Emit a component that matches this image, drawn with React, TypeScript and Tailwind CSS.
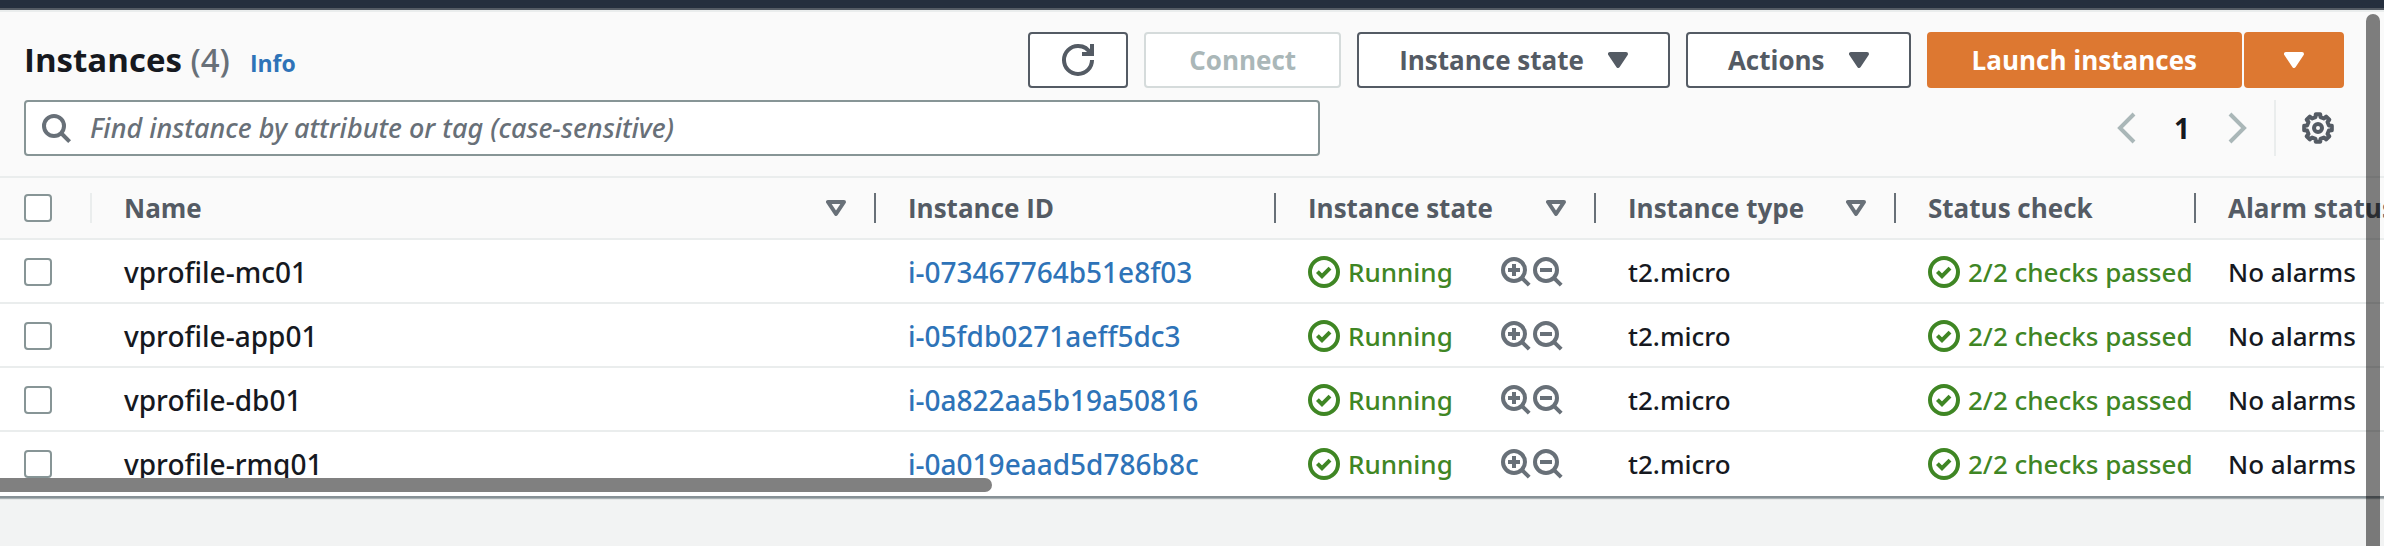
import type { ReactNode } from "react";

type Instance = { name: string; id: string; type: string };

const instances: Instance[] = [
  { name: "vprofile-mc01", id: "i-073467764b51e8f03", type: "t2.micro" },
  { name: "vprofile-app01", id: "i-05fdb0271aeff5dc3", type: "t2.micro" },
  { name: "vprofile-db01", id: "i-0a822aa5b19a50816", type: "t2.micro" },
  { name: "vprofile-rmq01", id: "i-0a019eaad5d786b8c", type: "t2.micro" },
];

const columns = [
  { label: "Name", sortable: true, width: "w-[784px]" },
  { label: "Instance ID", sortable: false, width: "w-[400px]" },
  { label: "Instance state", sortable: true, width: "w-[320px]" },
  { label: "Instance type", sortable: true, width: "w-[300px]" },
  { label: "Status check", sortable: false, width: "w-[300px]" },
  { label: "Alarm status", sortable: false, width: "w-[300px]" },
];

function Icon({ children, className = "" }: { children: ReactNode; className?: string }) {
  return (
    <svg
      viewBox="0 0 16 16"
      aria-hidden="true"
      className={`size-8 shrink-0 fill-none stroke-current stroke-2 ${className}`}
    >
      {children}
    </svg>
  );
}

function Caret({ filled = false }: { filled?: boolean }) {
  return (
    <svg
      viewBox="3 0 10 16"
      aria-hidden="true"
      className={`h-8 w-5 shrink-0 stroke-current stroke-2 ${filled ? "fill-current" : "fill-none"}`}
    >
      <path d="M4 5h8l-4 6-4-6z" strokeLinejoin="round" />
    </svg>
  );
}

function CheckIcon() {
  return (
    <Icon>
      <circle cx="8" cy="8" r="7" />
      <path d="m4.7 7.8 2.3 2.3 4-4" />
    </Icon>
  );
}

// Eight-toothed cog centred on 8,8.
const gearPath =
  Array.from({ length: 8 }, (_, i) => i * 45)
    .flatMap((a) => [
      [a - 13, 5.6],
      [a - 9, 7],
      [a + 9, 7],
      [a + 13, 5.6],
    ])
    .map(([deg, r], i) => {
      const t = (deg * Math.PI) / 180;
      return `${i ? "L" : "M"}${(8 + r * Math.cos(t)).toFixed(2)} ${(8 + r * Math.sin(t)).toFixed(2)}`;
    })
    .join("") + "Z";

const buttonBase =
  "flex h-14 items-center justify-center rounded border-2 text-[26px] font-bold whitespace-nowrap";

function Button({ children, className = "px-10", ...rest }: { children: ReactNode; className?: string; "aria-label"?: string }) {
  return (
    <button type="button" className={`${buttonBase} gap-6 border-[#545b64] bg-white text-[#545b64] ${className}`} {...rest}>
      {children}
    </button>
  );
}

function Checkbox({ label }: { label: string }) {
  return (
    <input
      type="checkbox"
      aria-label={label}
      className="block size-7 appearance-none rounded border-2 border-[#879596] bg-white checked:bg-[#0073bb]"
    />
  );
}

function Toolbar() {
  return (
    <header className="flex flex-col gap-3 border-b-2 border-[#eaeded] pt-5 pr-10 pb-5 pl-6">
      <div className="flex items-center justify-between">
        <div className="flex items-baseline">
          <h1 className="text-[33px] leading-[44px] font-bold text-[#16191f]">
            Instances <span className="font-['Noto_Sans',sans-serif] font-medium text-[#687078]">(4)</span>
          </h1>
          <a href="#info" className="ml-5 text-[23px] font-bold text-[#2e73b8]">
            Info
          </a>
        </div>
        <div className="flex gap-4">
          <Button aria-label="Refresh" className="w-[100px]">
            <Icon>
              <path d="M10 5h5V0" />
              <path d="M15 8a6.957 6.957 0 0 1-7 7 6.957 6.957 0 0 1-7-7 6.957 6.957 0 0 1 7-7 6.87 6.87 0 0 1 6.3 4" />
            </Icon>
          </Button>
          <button type="button" disabled className={`${buttonBase} border-[#d5dbdb] bg-white px-[43px] text-[#aab7b8]`}>
            Connect
          </button>
          <Button>
            Instance state <Caret filled />
          </Button>
          <Button>
            Actions <Caret filled />
          </Button>
          <div className="flex gap-0.5">
            <button type="button" className={`${buttonBase} border-[#dd7831] bg-[#dd7831] px-[43px] text-white`}>
              Launch instances
            </button>
            <button
              type="button"
              aria-label="More launch options"
              className={`${buttonBase} w-[100px] border-[#dd7831] bg-[#dd7831] text-white`}
            >
              <Caret filled />
            </button>
          </div>
        </div>
      </div>

      <div className="flex items-center justify-between gap-10">
        <label className="flex h-14 max-w-[1296px] flex-1 items-center gap-[18px] rounded border-2 border-[#879596] bg-white px-3.5 text-[#687078]">
          <Icon>
            <circle cx="7" cy="7" r="5" />
            <path d="m10.5 10.5 4.3 4.3" />
          </Icon>
          <input
            type="search"
            aria-label="Find instance"
            placeholder="Find instance by attribute or tag (case-sensitive)"
            className="w-full min-w-0 flex-1 bg-transparent font-['Noto_Sans',sans-serif] text-[27px] font-medium outline-none placeholder:text-[#687078] placeholder:italic"
          />
        </label>
        <div className="flex h-14 items-center">
          <nav aria-label="Pagination" className="flex items-center gap-8 pr-5">
            <button type="button" aria-label="Previous page" className="text-[#aab7b8]">
              <Icon>
                <path d="M12 1 5 8l7 7" />
              </Icon>
            </button>
            <button type="button" aria-current="page" className="text-[28px] font-bold text-[#16191f]">
              1
            </button>
            <button type="button" aria-label="Next page" className="text-[#aab7b8]">
              <Icon>
                <path d="m4 1 7 7-7 7" />
              </Icon>
            </button>
          </nav>
          <button
            type="button"
            aria-label="Preferences"
            className="flex h-14 items-center border-l-2 border-[#eaeded] pr-2.5 pl-[26px] text-[#545b64]"
          >
            <Icon>
              <path d={gearPath} strokeLinejoin="round" />
              <circle cx="8" cy="8" r="2" />
            </Icon>
          </button>
        </div>
      </div>
    </header>
  );
}

function HeaderCell({ label, sortable }: { label: string; sortable: boolean }) {
  return (
    <th scope="col" className="h-[62px] border-b-2 border-[#eaeded] p-0 text-left text-[26px] font-bold text-[#545b64]">
      <div className="flex h-[30px] items-center justify-between border-r-2 border-[#687078] pr-7 pl-8 whitespace-nowrap">
        {label}
        {sortable && (
          <button type="button" aria-label={`Sort by ${label}`} className="text-[#687078]">
            <Caret />
          </button>
        )}
      </div>
    </th>
  );
}

const cell = "h-16 overflow-hidden border-b-2 border-[#eaeded] p-0 pt-0.5 pl-8 group-last:border-transparent";

function Row({ instance }: { instance: Instance }) {
  return (
    <tr className="group">
      <td className="h-16 border-b-2 border-[#eaeded] p-0 pt-0.5 pl-6 group-last:border-transparent">
        <Checkbox label={`Select ${instance.name}`} />
      </td>
      <td className={`${cell} text-[28px]`}>{instance.name}</td>
      <td className={`${cell} text-[28px]`}>
        <a href={`#${instance.id}`} className="text-[#2e73b8]">
          {instance.id}
        </a>
      </td>
      <td className={cell}>
        <div className="flex items-center justify-between pr-8">
          <span className="flex items-center gap-2 text-[#3f8624]">
            <CheckIcon />
            Running
          </span>
          <span className="flex text-[#687078]">
            <button type="button" aria-label="Add state to filter">
              <Icon>
                <circle cx="7" cy="7" r="5.5" />
                <path d="m10.8 10.8 3.8 3.8M4 7h6M7 4v6" />
              </Icon>
            </button>
            <button type="button" aria-label="Remove state from filter">
              <Icon>
                <circle cx="7" cy="7" r="5.5" />
                <path d="m10.8 10.8 3.8 3.8M4 7h6" />
              </Icon>
            </button>
          </span>
        </div>
      </td>
      <td className={cell}>{instance.type}</td>
      <td className={cell}>
        <span className="flex items-center gap-2 text-[#3f8624]">
          <CheckIcon />
          2/2 checks passed
        </span>
      </td>
      <td className={cell}>No alarms</td>
    </tr>
  );
}

export default function App() {
  return (
    <div className="relative min-h-screen overflow-hidden bg-[#f2f3f3] font-['Open_Sans',sans-serif] text-[#16191f]">
      <div className="h-2.5 border-b-2 border-[#545b64] bg-[#252f3e]" />

      <section className="relative border-t-2 border-b-2 border-t-[#eaeded] border-b-[#879196] bg-[#fafafa] shadow-[0_1px_1px_0_rgba(0,28,36,0.3)]">
        <Toolbar />
        <div className="overflow-hidden">
          <table className="w-full min-w-[2496px] table-fixed border-separate border-spacing-0 whitespace-nowrap">
            <colgroup>
              <col className="w-[92px]" />
              {columns.map((c) => (
                <col key={c.label} className={c.width} />
              ))}
            </colgroup>
            <thead>
              <tr>
                <th scope="col" className="border-b-2 border-[#eaeded] p-0">
                  <div className="flex h-[30px] items-center border-r-2 border-[#eaeded] pl-6">
                    <Checkbox label="Select all instances" />
                  </div>
                </th>
                {columns.map((c) => (
                  <HeaderCell key={c.label} label={c.label} sortable={c.sortable} />
                ))}
              </tr>
            </thead>
            <tbody className="bg-white font-['Noto_Sans',sans-serif] text-[26px] leading-9 font-medium">
              {instances.map((i) => (
                <Row key={i.id} instance={i} />
              ))}
            </tbody>
          </table>
        </div>
        <div className="absolute bottom-1 left-0 h-3.5 w-[992px] rounded-r-full bg-[#808080]" />
      </section>

      <div className="absolute top-3.5 right-1 -bottom-4 w-3.5 rounded-full bg-black/50" />
    </div>
  );
}
